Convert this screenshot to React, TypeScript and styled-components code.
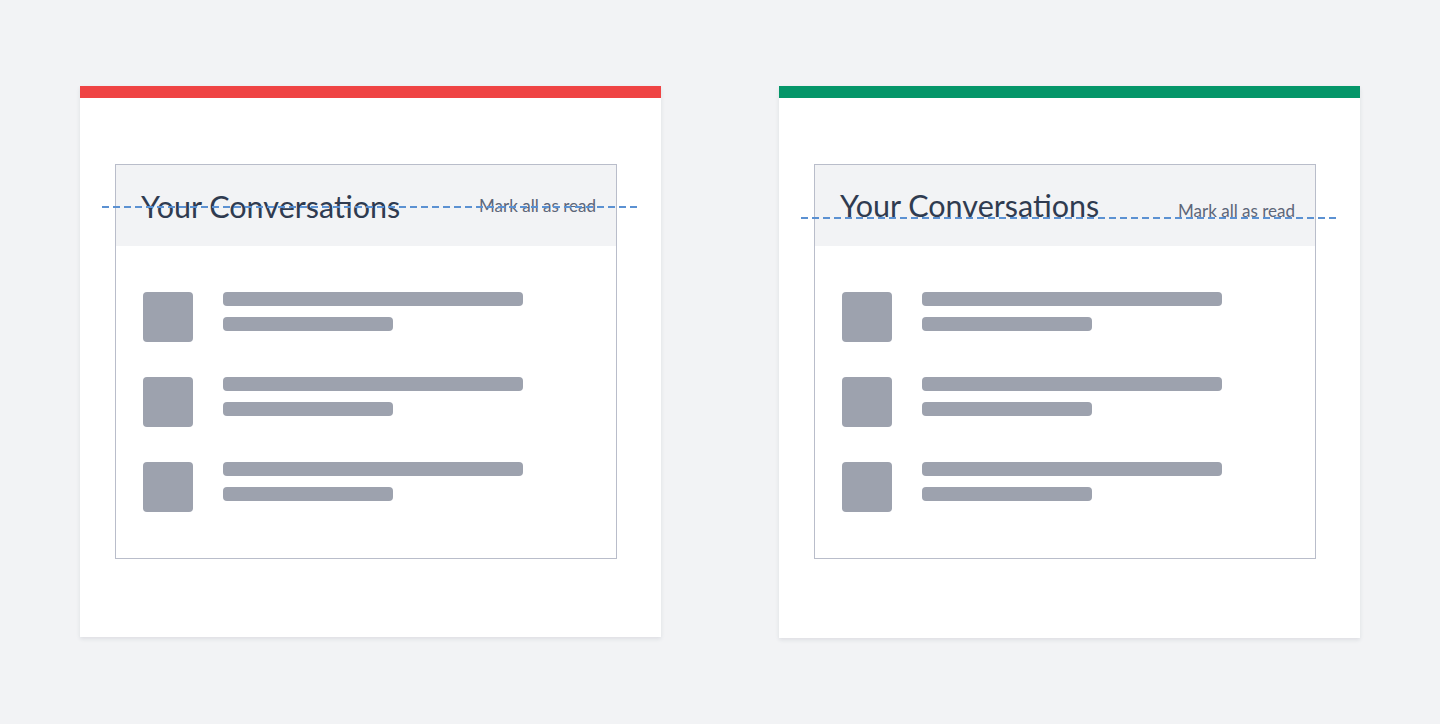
import styled, { createGlobalStyle } from 'styled-components';

const GlobalStyle = createGlobalStyle`
  html, body {
    margin: 0;
    padding: 0;
    background: #f2f3f5;
    font-family: Lato, "Open Sans", "Liberation Sans", sans-serif;
  }
`

const Page = styled.div`
  display: flex;
  gap: 118px;
  padding: 86px 80px;
  min-height: 724px;
  box-sizing: border-box;
`

const Card = styled.div<{ $accent: string; $height: number }>`
  width: 581px;
  height: ${p => p.$height}px;
  box-sizing: border-box;
  background: #ffffff;
  border-top: 12px solid ${p => p.$accent};
  box-shadow: 0 2px 4px rgba(40, 50, 70, 0.1);
  padding: 66px 44px 0 35px;
`

const Panel = styled.div`
  width: 502px;
  height: 395px;
  box-sizing: border-box;
  border: 1px solid #b9bdca;
  background: #ffffff;
`

const Header = styled.div<{ $align: string; $padTop: number }>`
  position: relative;
  display: flex;
  justify-content: space-between;
  align-items: ${p => p.$align};
  height: 81px;
  box-sizing: border-box;
  padding: ${p => p.$padTop}px 20px 0 25px;
  background: #f2f3f5;
`

const Title = styled.h2`
  margin: 0;
  font-size: 30.5px;
  line-height: 36px;
  font-weight: 400;
  color: #2f3b50;
`

const MarkRead = styled.span`
  font-size: 17px;
  color: #5d6679;
`

const GuideLine = styled.div<{ $top: number }>`
  position: absolute;
  left: -14px;
  right: -23px;
  top: ${p => p.$top}px;
  height: 2px;
  background: repeating-linear-gradient(
    to right,
    #5b91d2 0 7px,
    transparent 7px 11px
  );
  pointer-events: none;
`

const List = styled.div`
  display: flex;
  flex-direction: column;
  gap: 35px;
  padding: 46px 27px;
`

const Row = styled.div`
  display: flex;
  gap: 30px;
`

const Avatar = styled.div`
  width: 50px;
  height: 50px;
  border-radius: 4px;
  background: #9da2ae;
`

const Lines = styled.div`
  display: flex;
  flex-direction: column;
  gap: 11px;
`

const Bar = styled.div<{ $width: number }>`
  width: ${p => p.$width}px;
  height: 14px;
  border-radius: 4px;
  background: #9da2ae;
`

type BoxProps = { accent: string; align: string; padTop: number; lineTop: number; height: number }

const ConversationBox = ({ accent, align, padTop, lineTop, height }: BoxProps) => (
  <Card $accent={accent} $height={height}>
    <Panel>
      <Header $align={align} $padTop={padTop}>
        <Title>Your Conversations</Title>
        <MarkRead>Mark all as read</MarkRead>
        <GuideLine $top={lineTop} />
      </Header>
      <List>
        {[0, 1, 2].map(i => (
          <Row key={i}>
            <Avatar />
            <Lines>
              <Bar $width={300} />
              <Bar $width={170} />
            </Lines>
          </Row>
        ))}
      </List>
    </Panel>
  </Card>
)

export default function App() {
  return (
    <>
      <GlobalStyle />
      <Page>
        <ConversationBox accent="#ef4444" align="center" padTop={0} lineTop={41} height={551} />
        <ConversationBox accent="#059669" align="baseline" padTop={22} lineTop={52} height={552} />
      </Page>
    </>
  );
}
